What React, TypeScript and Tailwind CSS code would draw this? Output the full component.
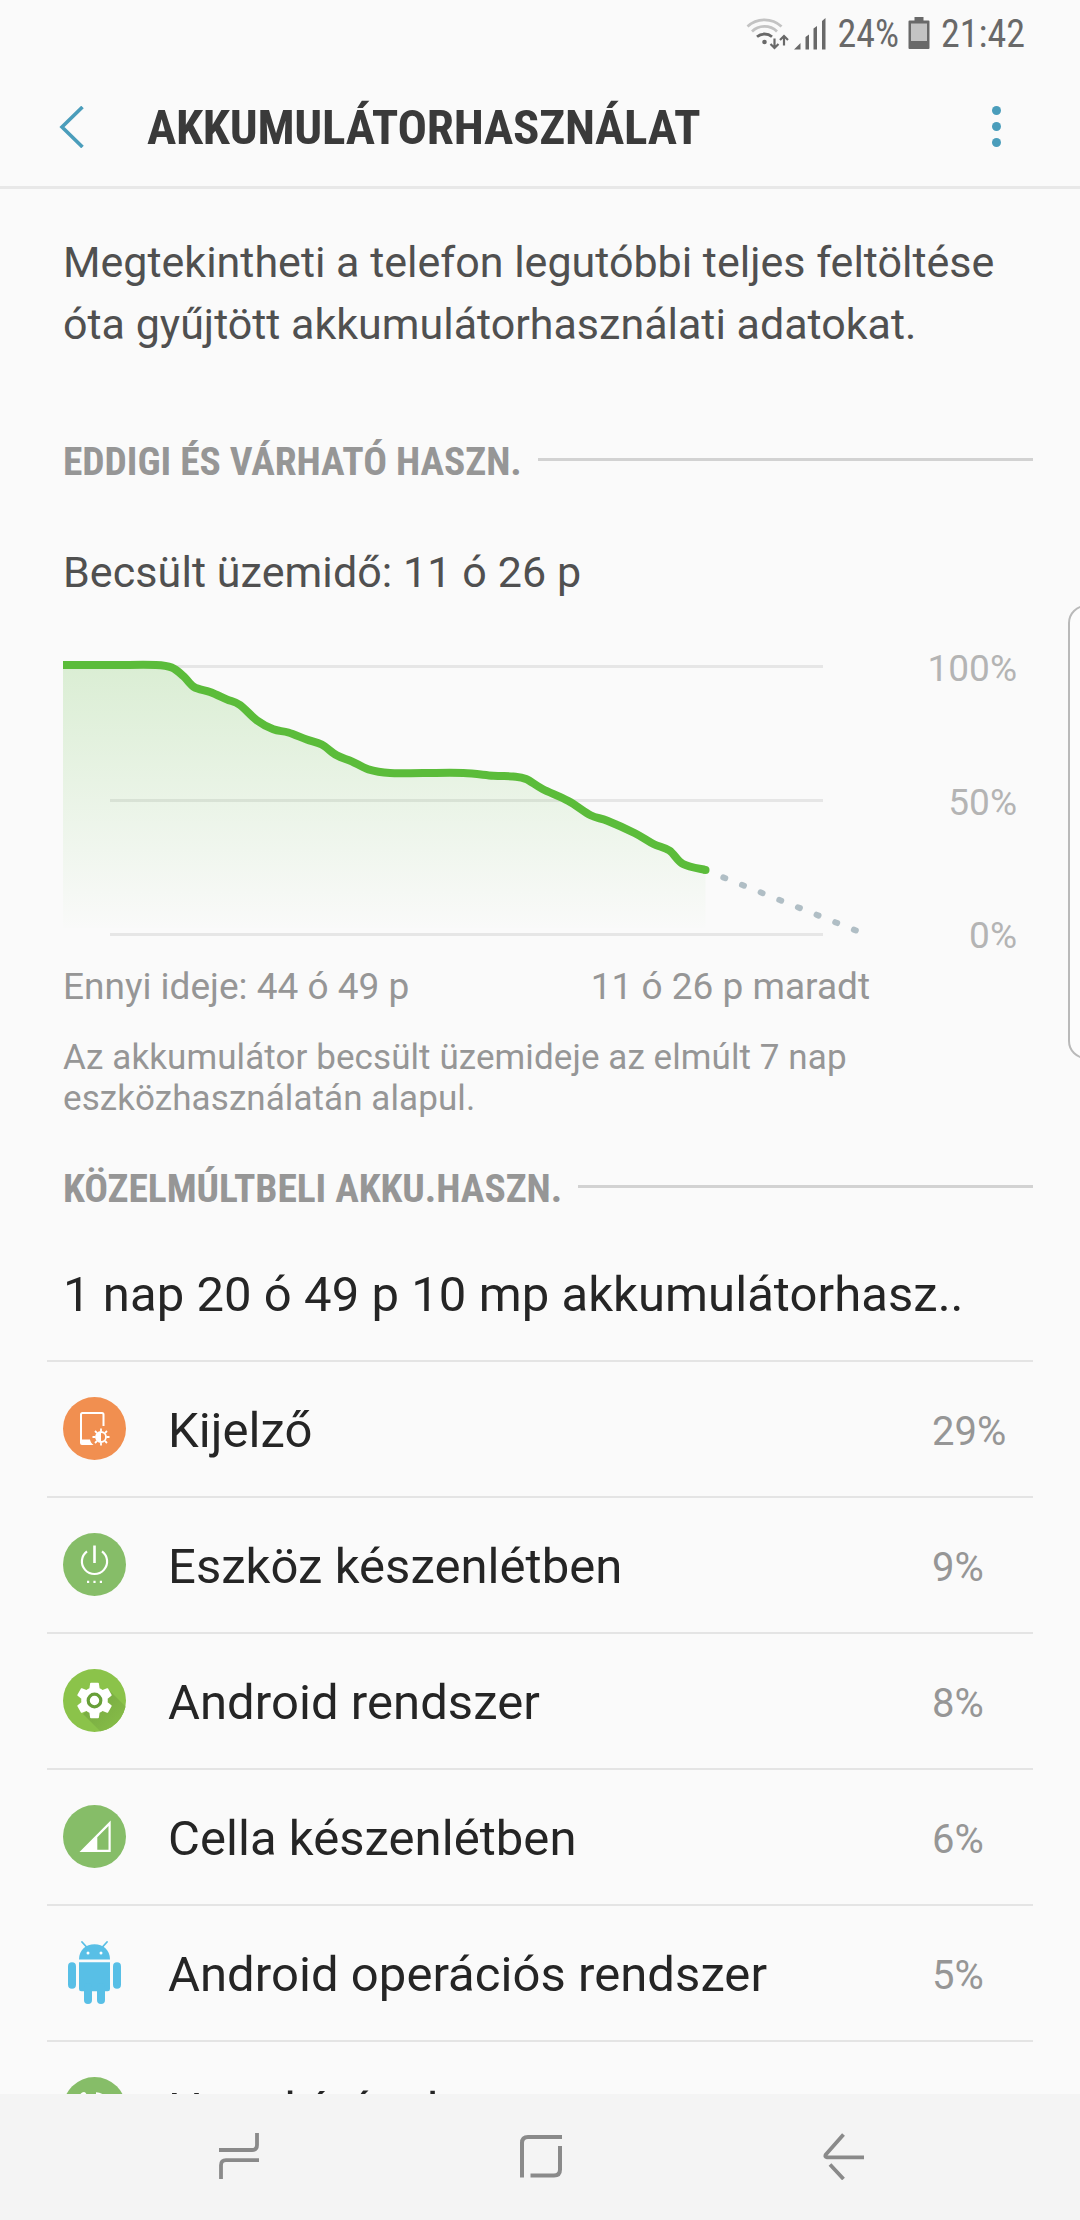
import type { ReactNode } from 'react';

type Point = [number, number];

const history: Point[] = [
  [0, 17], [50, 17], [93, 17], [108.7, 19.5], [120.3, 28], [131, 39], [147, 44], [163.7, 51.3],
  [177, 57], [193.7, 72.2], [210.3, 81.3], [225.3, 84.5], [243.7, 91.5], [258.7, 96.5],
  [273.7, 107.3], [288.7, 113.3], [305.3, 121.3], [327, 125], [360, 125], [400.3, 125],
  [430.3, 127.7], [450, 128.5], [463, 131], [479.5, 141], [505.4, 153], [527.6, 167.3],
  [544.3, 172.7], [572, 185.2], [590.5, 196], [606.4, 202.5], [620, 216], [642.5, 222],
];

const forecast = Array.from({ length: 8 }, (_, i) => ({
  x: 661.3 + i * 18.65,
  y: 229.8 + i * 7.47,
}));

function smoothPath(points: Point[]) {
  let d = `M${points[0][0]} ${points[0][1]}`;
  for (let i = 0; i < points.length - 1; i++) {
    const p0 = points[Math.max(i - 1, 0)];
    const p1 = points[i];
    const p2 = points[i + 1];
    const p3 = points[Math.min(i + 2, points.length - 1)];
    const c1 = [p1[0] + (p2[0] - p0[0]) / 6, p1[1] + (p2[1] - p0[1]) / 6];
    const c2 = [p2[0] - (p3[0] - p1[0]) / 6, p2[1] - (p3[1] - p1[1]) / 6];
    d += ` C${c1[0]} ${c1[1]} ${c2[0]} ${c2[1]} ${p2[0]} ${p2[1]}`;
  }
  return d;
}

const DisplayIcon = () => (
  <svg viewBox="0 0 63 63" className="mb-px size-[63px]" fill="none">
    <circle cx="31.5" cy="31.5" r="31.5" fill="#f18f50" />
    <path d="M40.5 29V17.5a1.5 1.5 0 0 0-1.5-1.5H19.5a1.5 1.5 0 0 0-1.5 1.5V44" stroke="#fff" strokeWidth="2" />
    <path d="M17 42.5h10c.3 2 1.5 4 3.5 5.5H19a2 2 0 0 1-2-2z" fill="#fff" />
    <circle cx="38" cy="40" r="5" stroke="#fff" strokeWidth="1.8" />
    <path d="M38 35a5 5 0 0 0 0 10z" fill="#fff" />
    <path
      d="M38 31.5v3M38 45.5v3M29.5 40h3M43.5 40h3M32 34l2 2M42 44l2 2M32 46l2-2M42 36l2-2"
      stroke="#fff"
      strokeWidth="1.8"
    />
  </svg>
);

const StandbyIcon = () => (
  <svg viewBox="0 0 63 63" className="mb-px size-[63px]" fill="none">
    <circle cx="31.5" cy="31.5" r="31.5" fill="#86bd68" />
    <path d="M31.5 12.5V30" stroke="#fff" strokeWidth="2.6" />
    <path d="M24 18.3a12.6 12.6 0 1 0 15 0" stroke="#fff" strokeWidth="2.2" />
    <path d="M24 48.8h2.2M30.4 48.8h2.2M36.8 48.8h2.2" stroke="#fff" strokeWidth="2.2" />
  </svg>
);

const SystemIcon = () => (
  <svg viewBox="0 0 63 63" className="mb-px size-[63px]">
    <defs>
      <clipPath id="system-disc">
        <circle cx="31.5" cy="31.5" r="31.5" />
      </clipPath>
      <linearGradient id="system-shadow" x1="0" y1="0" x2="1" y2="1">
        <stop offset="0" stopColor="#74a540" />
        <stop offset="1" stopColor="#8bc34a" />
      </linearGradient>
    </defs>
    <circle cx="31.5" cy="31.5" r="31.5" fill="#8bc34a" />
    <path d="M47 22l20 20v25H42L20 45z" fill="url(#system-shadow)" clipPath="url(#system-disc)" />
    <path
      transform="translate(10.26 10.26) scale(1.77)"
      fill="#fff"
      d="M19.43 12.98c.04-.32.07-.64.07-.98s-.03-.66-.07-.98l2.11-1.65c.19-.15.24-.42.12-.64l-2-3.46c-.12-.22-.39-.3-.61-.22l-2.49 1c-.52-.4-1.08-.73-1.69-.98l-.38-2.65C14.46 2.18 14.25 2 14 2h-4c-.25 0-.46.18-.49.42l-.38 2.65c-.61.25-1.17.59-1.69.98l-2.49-1c-.23-.09-.49 0-.61.22l-2 3.46c-.13.22-.07.49.12.64l2.11 1.65c-.04.32-.07.65-.07.98s.03.66.07.98l-2.11 1.65c-.19.15-.24.42-.12.64l2 3.46c.12.22.39.3.61.22l2.49-1c.52.4 1.08.73 1.69.98l.38 2.65c.03.24.24.42.49.42h4c.25 0 .46-.18.49-.42l.38-2.65c.61-.25 1.17-.59 1.69-.98l2.49 1c.23.09.49 0 .61-.22l2-3.46c.12-.22.07-.49-.12-.64z"
    />
    <circle cx="31.5" cy="31.5" r="6.3" fill="#fff" stroke="#689f38" strokeWidth="3.2" />
  </svg>
);

const CellIcon = () => (
  <svg viewBox="0 0 63 63" className="mb-px size-[63px]">
    <circle cx="31.5" cy="31.5" r="31.5" fill="#86bd68" />
    <path d="M47.7 15.5V47H16.5zM45.5 21L34.3 32.2V44.8H45.5z" fill="#fff" fillRule="evenodd" />
  </svg>
);

const AndroidIcon = () => (
  <svg viewBox="0 0 63 63" className="mb-px size-[63px]" fill="#58bfe6">
    <path d="M19 1l5 5.5M44 1l-5 5.5" stroke="#58bfe6" strokeWidth="1.8" strokeLinecap="round" />
    <path d="M16 18.5C16 9 23 3.3 31.5 3.3S47 9 47 18.5z" />
    <path d="M16 21.3h31V48a2.3 2.3 0 0 1-2.3 2.3H18.3A2.3 2.3 0 0 1 16 48z" />
    <rect x="5" y="21.3" width="8" height="26.5" rx="4" />
    <rect x="50" y="21.3" width="8" height="26.5" rx="4" />
    <rect x="21" y="42" width="8" height="21" rx="4" />
    <rect x="34" y="42" width="8" height="21" rx="4" />
    <circle cx="25" cy="12" r="1.5" fill="#fff" />
    <circle cx="38" cy="12" r="1.5" fill="#fff" />
  </svg>
);

const CallIcon = () => (
  <svg viewBox="0 0 63 63" className="mb-px size-[63px]" fill="none">
    <circle cx="31.5" cy="31.5" r="31.5" fill="#86bd68" />
    <path
      d="M21 15c2.5 0 4 6 4.5 8-.5 2-3 3-3 4.5 1 5 7.5 11.5 12.5 12.5 1.5 0 2.5-2.5 4.5-3 2 .5 8 2 8 4.5 0 3-3 6-6 6-11 0-26-15-26-26 0-3 3-6.5 5.5-6.5z"
      fill="#fff"
    />
    <path d="M33 16.3a13.5 13.5 0 0 1 13 13" stroke="#fff" strokeWidth="2" />
  </svg>
);

const apps: { name: string; usage: string; icon: ReactNode }[] = [
  { name: 'Kijelző', usage: '29%', icon: <DisplayIcon /> },
  { name: 'Eszköz készenlétben', usage: '9%', icon: <StandbyIcon /> },
  { name: 'Android rendszer', usage: '8%', icon: <SystemIcon /> },
  { name: 'Cella készenlétben', usage: '6%', icon: <CellIcon /> },
  { name: 'Android operációs rendszer', usage: '5%', icon: <AndroidIcon /> },
  { name: 'Hanghívások', usage: '', icon: <CallIcon /> },
];

function SectionTitle({ children }: { children: ReactNode }) {
  return (
    <div className="flex items-center gap-4">
      <h2 className="font-['Roboto_Condensed',Roboto,sans-serif] text-[39.5px] leading-[40px] font-bold tracking-[-0.05px] whitespace-nowrap text-[#969696] [font-stretch:75%]">
        {children}
      </h2>
      <div className="mb-[6px] h-[3px] flex-1 bg-[#d2d2d2]" />
    </div>
  );
}

function StatusBar() {
  return (
    <div className="flex h-[69px] shrink-0 items-center justify-end pr-[55px] font-['Roboto_Condensed',Roboto,sans-serif] text-[38px] text-[#696969] [font-stretch:75%]">
      <svg viewBox="0 0 84 36" className="mr-2 h-9 w-[84px]" fill="none">
        <path d="M1.5 9.5a25 25 0 0 1 34 0" stroke="#c3c3c3" strokeWidth="2.8" />
        <path d="M6 14.5a18 18 0 0 1 25 0" stroke="#c3c3c3" strokeWidth="2.8" />
        <path d="M11 19.8a11.5 11.5 0 0 1 15 0" stroke="#696969" strokeWidth="2.8" />
        <circle cx="18.5" cy="25" r="2.3" fill="#696969" />
        <path d="M28.5 21.5v9M24.5 27l4 4 4-4M38 28.5v-9M34 23l4-4 4 4" stroke="#696969" strokeWidth="2.2" />
        <path d="M54.5 26v6.5H48zM63 17.5v15h-3.5V20zM71 9v23.5h-3.5V11.5zM79.5 1v31.5H76V4z" fill="#696969" />
      </svg>
      <span>24%</span>
      <svg viewBox="0 0 22 32" className="mr-[11px] mb-[3px] ml-[9px] h-8 w-[22px]">
        <path d="M6.5 0h9v3.5H20.5A1 1 0 0 1 21.5 4.5V31a1 1 0 0 1-1 1H1.5a1 1 0 0 1-1-1V4.5a1 1 0 0 1 1-1h5z" fill="#696969" />
        <path d="M3 6.5h16V24H3z" fill="#c3c3c3" />
      </svg>
      <span>21:42</span>
    </div>
  );
}

function BatteryChart() {
  const line = smoothPath(history);

  return (
    <div className="mt-[52px] flex h-[308px] justify-between pr-4">
      <svg viewBox="0 0 820 308" className="h-[308px] w-[820px]" fill="none">
        <defs>
          <linearGradient id="usage" x1="0" y1="17" x2="0" y2="286" gradientUnits="userSpaceOnUse">
            <stop offset="0" stopColor="#5bbc3a" stopOpacity="0.2" />
            <stop offset="1" stopColor="#5bbc3a" stopOpacity="0" />
          </linearGradient>
        </defs>
        <path d="M47 18.5H760M47 152.5H760M47 286.5H760" stroke="#e6e6e6" strokeWidth="3" />
        <path d={`${line} V280 H0 Z`} fill="url(#usage)" />
        <path d={line} stroke="#5bbc3a" strokeWidth="8" />
        <circle cx="642.5" cy="222" r="4" fill="#5bbc3a" />
        {forecast.map((dot) => (
          <rect
            key={dot.x}
            x={dot.x - 4}
            y={dot.y - 3}
            width="8"
            height="6"
            rx="2.8"
            fill="#b0bec5"
            transform={`rotate(22 ${dot.x} ${dot.y})`}
          />
        ))}
      </svg>
      <div className="flex flex-col justify-between text-right text-[37px] leading-[41px] text-[#b4b4b4]">
        <span>100%</span>
        <span>50%</span>
        <span>0%</span>
      </div>
    </div>
  );
}

function NavBar() {
  return (
    <nav className="flex h-[126px] shrink-0 items-center justify-between bg-[#f4f4f4] pr-[215px] pb-[2px] pl-[218px]">
      <svg viewBox="0 0 42 48" className="h-12 w-[42px]" fill="none" stroke="#8a8a8a" strokeWidth="3.8">
        <path d="M39 1v12q0 5-5 5H1M41 28.2H8q-5 0-5 5V47" />
      </svg>
      <svg viewBox="0 0 44 46" className="mr-px h-[46px] w-11" fill="none" stroke="#8a8a8a" strokeWidth="4">
        <path d="M43 4H9Q3 4 3 10v34.5M41 13v23.5q0 6-6 6H11.5" />
      </svg>
      <svg viewBox="0 0 42 48" className="h-12 w-[42px]" fill="none" stroke="#8a8a8a" strokeWidth="3.8">
        <path d="M20.5 2.5L2.8 22.5Q1.5 25 4 25.3H41M7 32.5L20.5 47" />
      </svg>
    </nav>
  );
}

export default function App() {
  return (
    <div className="relative flex h-[2220px] w-[1080px] flex-col overflow-hidden bg-[#fafafa] font-[Roboto,sans-serif]">
      <StatusBar />

      <header className="flex h-[120px] shrink-0 items-center border-b-[3px] border-[#e8e8e8] pr-[79px] pl-[59px]">
        <svg viewBox="0 0 26 42" className="mb-[2px] h-[42px] w-[26px]" fill="none">
          <path d="M23.5 1L3 21l20.5 20" stroke="#4a9dbb" strokeWidth="3.6" />
        </svg>
        <h1 className="mt-px ml-[62px] flex-1 font-['Roboto_Condensed',Roboto,sans-serif] text-[49px] leading-[56px] font-bold tracking-[-0.25px] text-[#3a3a3a] [font-stretch:75%]">
          AKKUMULÁTORHASZNÁLAT
        </h1>
        <div className="mb-[2px] flex flex-col gap-[7px]">
          <span className="size-[9px] rounded-full bg-[#4a9dbb]" />
          <span className="size-[9px] rounded-full bg-[#4a9dbb]" />
          <span className="size-[9px] rounded-full bg-[#4a9dbb]" />
        </div>
      </header>

      <main className="min-h-0 flex-1 overflow-hidden pr-[47px] pl-[63px]">
        <p className="pt-[42px] text-[43px] leading-[62px] whitespace-nowrap text-[#505050]">
          Megtekintheti a telefon legutóbbi teljes feltöltése
          <br />
          óta gyűjtött akkumulátorhasználati adatokat.
        </p>

        <div className="mt-[87px]">
          <SectionTitle>EDDIGI ÉS VÁRHATÓ HASZN.</SectionTitle>
        </div>
        <p className="mt-[66px] text-[43px] leading-[48px] tracking-[0.08px] text-[#505050]">Becsült üzemidő: 11 ó 26 p</p>
        <BatteryChart />
        <div className="mt-[9px] flex w-[807px] justify-between text-[37px] leading-[44px] text-[#969696]">
          <span>Ennyi ideje: 44 ó 49 p</span>
          <span>11 ó 26 p maradt</span>
        </div>
        <p className="mt-7 text-[35px] leading-[41px] tracking-[0.08px] text-[#969696]">
          Az akkumulátor becsült üzemideje az elmúlt 7 nap
          <br />
          eszközhasználatán alapul.
        </p>

        <div className="mt-[50px]">
          <SectionTitle>KÖZELMÚLTBELI AKKU.HASZN.</SectionTitle>
        </div>
        <p className="mt-[58px] pb-[37px] text-[49px] leading-[56px] tracking-[0.06px] whitespace-nowrap text-[#252525]">
          1 nap 20 ó 49 p 10 mp akkumulátorhasz..
        </p>

        <ul className="-ml-4">
          {apps.map((app) => (
            <li key={app.name} className="flex h-[136px] items-center border-t-2 border-[#e4e4e4] pl-4">
              {app.icon}
              <span className="mt-1 ml-[42px] flex-1 text-[49px] leading-[56px] tracking-[0.05px] text-[#252525]">{app.name}</span>
              <span className="mt-[6px] w-[101px] text-[40px] leading-[48px] text-[#969696]">{app.usage}</span>
            </li>
          ))}
        </ul>
      </main>

      <NavBar />

      {/* Edge panel handle */}
      <div className="absolute top-[605px] -right-2 h-[454px] w-5 rounded-l-[18px] border-2 border-[#b9b9b9] bg-[#fcfcfc]" />
    </div>
  );
}
